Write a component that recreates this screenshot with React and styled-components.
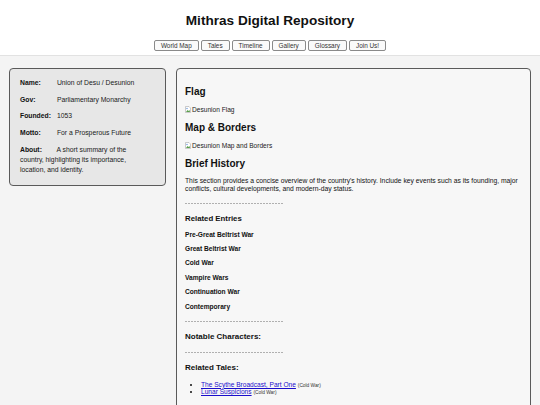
import React from 'react'
import styled, { createGlobalStyle } from 'styled-components'

const GlobalStyle = createGlobalStyle`
  body {
    margin: 0;
    background: #f4f4f4;
    font-family: "Liberation Sans", Arial, sans-serif;
    color: #111;
  }
`

const Header = styled.header`
  background: #fff;
  border-bottom: 1px solid #e2e2e2;
  text-align: center;
  padding: 13px 0 4px;
`

const Title = styled.h1`
  margin: 0;
  font-size: 13.6px;
  line-height: 16px;
  font-weight: bold;
`

const Nav = styled.nav`
  display: flex;
  justify-content: center;
  gap: 2px;
  margin-top: 11px;
`

const NavButton = styled.button`
  font-family: inherit;
  font-size: 6.4px;
  height: 11px;
  padding: 0 6px;
  background: #fafafa;
  color: #333;
  border: 1px solid #8a8a8a;
  border-radius: 2px;
  line-height: 9px;
`

const Main = styled.main`
  display: flex;
  align-items: flex-start;
  gap: 10px;
  padding: 12px 9px;
`

const Sidebar = styled.aside`
  width: 157px;
  box-sizing: border-box;
  background: #e7e7e7;
  border: 1px solid #5a5a5a;
  border-radius: 4px;
  padding: 9px 16px 9px 10px;
  font-size: 6.8px;
  line-height: 10.3px;
  color: #1a1a1a;
`

const Fact = styled.p`
  margin: 0 0 6.4px;
  &:last-child { margin-bottom: 0; }
`

const Label = styled.strong`
  display: inline-block;
  width: 35px;
  color: #111;
`

const Content = styled.section`
  flex: 1;
  min-height: 400px;
  background: #f7f7f7;
  border: 1px solid #5a5a5a;
  border-radius: 4px;
  padding: 9px 7px 9px 8px;
  font-size: 6.4px;
`

const H2 = styled.h2`
  margin: 8px 0 7px;
  font-size: 10px;
  line-height: 12px;
`

const H3 = styled.h3`
  margin: 0 0 6.7px;
  font-size: ${({ size }) => size || 7.8}px;
  line-height: 10px;
`

const ImageAlt = styled.div`
  display: flex;
  align-items: center;
  gap: 1px;
  font-size: 6.6px;
  line-height: 9px;
  color: #222;
`

const Paragraph = styled.p`
  margin: 0;
  font-size: 6.75px;
  line-height: 8px;
`

const Divider = styled.div`
  width: 98px;
  height: 1px;
  background-image: linear-gradient(to right, #b0b0b0 55%, transparent 55%);
  background-size: 3px 1px;
  margin: 10px 0;
`

const Entry = styled.div`
  font-weight: bold;
  font-size: 6.6px;
  line-height: 8px;
  margin-bottom: 6.4px;
  &:last-child { margin-bottom: 0; }
`

const TaleList = styled.ul`
  margin: 8px 0 0;
  padding-left: 16px;
  font-size: 6.6px;
  line-height: 7.4px;
`

const TaleLink = styled.a`
  color: #1a0dcc;
  text-decoration: underline;
`

const Era = styled.span`
  font-size: 4.8px;
  line-height: 1;
  color: #333;
`

const BrokenIcon = () => (
  <svg width="6" height="7" viewBox="0 0 12 14">
    <path d="M1 1h7l3 3v9H1z" fill="#fff" stroke="#999" strokeWidth="1" />
    <path d="M2 12l3-4 2 2 2-2 1 4z" fill="#5a9e4b" />
    <circle cx="4" cy="5" r="1.3" fill="#5b8fd6" />
  </svg>
)

const navItems = ['World Map', 'Tales', 'Timeline', 'Gallery', 'Glossary', 'Join Us!']
const entries = [
  'Pre-Great Beltrist War',
  'Great Beltrist War',
  'Cold War',
  'Vampire Wars',
  'Continuation War',
  'Contemporary',
]
const tales = [
  { title: 'The Scythe Broadcast, Part One', era: 'Cold War' },
  { title: 'Lunar Suspicions', era: 'Cold War' },
]

export default function App() {
  return (
    <>
      <GlobalStyle />
      <Header>
        <Title>Mithras Digital Repository</Title>
        <Nav>
          {navItems.map(item => (
            <NavButton key={item}>{item}</NavButton>
          ))}
        </Nav>
      </Header>
      <Main>
        <Sidebar>
          <Fact><Label>Name:</Label> Union of Desu / Desunion</Fact>
          <Fact><Label>Gov:</Label> Parliamentary Monarchy</Fact>
          <Fact><Label>Founded:</Label> 1053</Fact>
          <Fact><Label>Motto:</Label> For a Prosperous Future</Fact>
          <Fact>
            <Label>About:</Label> A short summary of the country, highlighting its importance,
            location, and identity.
          </Fact>
        </Sidebar>
        <Content>
          <H2>Flag</H2>
          <ImageAlt><BrokenIcon />Desunion Flag</ImageAlt>
          <H2>Map &amp; Borders</H2>
          <ImageAlt><BrokenIcon />Desunion Map and Borders</ImageAlt>
          <H2>Brief History</H2>
          <Paragraph>
            This section provides a concise overview of the country's history. Include key events
            such as its founding, major conflicts, cultural developments, and modern-day status.
          </Paragraph>
          <Divider />
          <H3>Related Entries</H3>
          {entries.map(e => (
            <Entry key={e}>{e}</Entry>
          ))}
          <Divider />
          <H3 size={8}>Notable Characters:</H3>
          <Divider />
          <H3 size={8}>Related Tales:</H3>
          <TaleList>
            {tales.map(t => (
              <li key={t.title}>
                <TaleLink href="#">{t.title}</TaleLink> <Era>({t.era})</Era>
              </li>
            ))}
          </TaleList>
        </Content>
      </Main>
    </>
  )
}
